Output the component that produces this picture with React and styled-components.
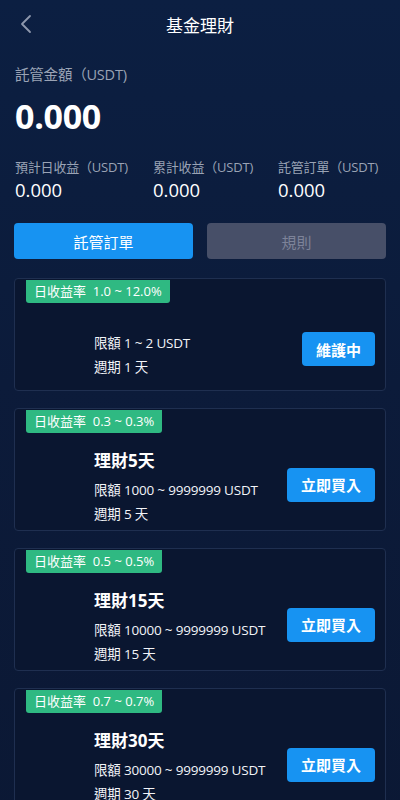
import React from "react";
import styled, { createGlobalStyle } from "styled-components";

const Global = createGlobalStyle`
  html, body { margin: 0; padding: 0; background: #0c1d3d; }
  body { font-family: "Open Sans", "Noto Sans CJK TC", sans-serif; color: #fff; }
  * { box-sizing: border-box; }
`;

const Page = styled.div`
  width: 400px;
  min-height: 800px;
  background: linear-gradient(180deg, #0c1f42 0%, #0c1b3a 45%, #0b1834 100%);
  padding-bottom: 40px;
`;

const Header = styled.div`
  height: 48px;
  display: flex;
  align-items: center;
  justify-content: center;
  position: relative;
`;

const Back = styled.button`
  position: absolute;
  left: 16px;
  top: 12px;
  background: none;
  border: 0;
  padding: 0;
  width: 20px;
  height: 24px;
  display: flex;
  align-items: center;
  justify-content: center;
`;

const Title = styled.h1`
  margin: 0;
  font-size: 17px;
  font-weight: 400;
  font-family: "Noto Sans CJK TC", sans-serif;
  color: #fff;
`;

const Summary = styled.div`
  padding: 17px 15px 0;
`;

const Label = styled.div`
  font-size: ${(p) => (p.$small ? "13px" : "14.5px")};
  color: #9aa3b5;
  font-family: "Open Sans", "Noto Sans CJK TC", sans-serif;
  line-height: 20px;
  white-space: nowrap;
  letter-spacing: -0.2px;
`;

const Big = styled.div`
  font-size: 34px;
  font-weight: 700;
  line-height: 44px;
  margin-top: 9px;
  letter-spacing: -0.3px;
`;

const Stats = styled.div`
  display: grid;
  grid-template-columns: 138px 125px 1fr;
  margin-top: 19px;
`;

const Value = styled.div`
  font-size: 18.5px;
  line-height: 26px;
`;

const Tabs = styled.div`
  display: grid;
  grid-template-columns: 1fr 1fr;
  gap: 14px;
  padding: 0 14px;
  margin-top: 20px;
`;

const Tab = styled.button`
  height: 36px;
  border: 0;
  border-radius: 4px;
  font-family: "Noto Sans CJK TC", sans-serif;
  font-size: 15px;
  background: ${(p) => (p.$active ? "#1793f2" : "#474f68")};
  color: ${(p) => (p.$active ? "#fff" : "#7d8399")};
`;

const List = styled.div`
  display: flex;
  flex-direction: column;
  gap: 17px;
  padding: 0 14px;
  margin-top: 19px;
`;

const Card = styled.div`
  background: #0a1630;
  border: 1px solid #1f2f50;
  border-radius: 4px;
`;

const Tag = styled.div`
  display: inline-block;
  margin-left: 11px;
  height: 23px;
  line-height: 23px;
  padding: 0 8px;
  background: #2fb982;
  border-radius: 0 0 3px 3px;
  font-size: 13px;
  color: #fff;
  white-space: nowrap;
`;

const Body = styled.div`
  display: flex;
  align-items: center;
  justify-content: space-between;
  padding: ${(p) => (p.$noTitle ? "28px 10px 11px 79px" : "16px 10px 4px 79px")};
`;

const Info = styled.div`
  display: flex;
  flex-direction: column;
`;

const Name = styled.div`
  font-size: 17px;
  font-weight: 700;
  line-height: 24px;
  margin-bottom: 5px;
  font-family: "Open Sans", "Noto Sans CJK TC", sans-serif;
`;

const Line = styled.div`
  font-size: 13.5px;
  line-height: 24px;
  color: #f2f4f8;
  white-space: nowrap;
  letter-spacing: -0.2px;
`;

const Action = styled.button`
  height: 34px;
  padding: 0 14px;
  border: 0;
  border-radius: 4px;
  background: #1793f2;
  color: #fff;
  font-size: 15px;
  font-weight: 700;
  font-family: "Noto Sans CJK TC", sans-serif;
  margin-bottom: ${(p) => (p.$noTitle ? "12px" : "6px")};
`;

const products = [
  { rate: "1.0 ~ 12.0%", name: "", limit: "1 ~ 2 USDT", period: "1", action: "維護中" },
  { rate: "0.3 ~ 0.3%", name: "理財5天", limit: "1000 ~ 9999999 USDT", period: "5", action: "立即買入" },
  { rate: "0.5 ~ 0.5%", name: "理財15天", limit: "10000 ~ 9999999 USDT", period: "15", action: "立即買入" },
  { rate: "0.7 ~ 0.7%", name: "理財30天", limit: "30000 ~ 9999999 USDT", period: "30", action: "立即買入" },
];

export default function App() {
  return (
    <Page>
      <Global />
      <Header>
        <Back aria-label="back">
          <svg width="12" height="20" viewBox="0 0 12 20">
            <path d="M10 2 L2 10 L10 18" fill="none" stroke="#8e98ad" strokeWidth="1.8" strokeLinecap="round" strokeLinejoin="round" />
          </svg>
        </Back>
        <Title>基金理財</Title>
      </Header>
      <Summary>
        <Label>託管金額（USDT)</Label>
        <Big>0.000</Big>
        <Stats>
          <div>
            <Label $small>預計日收益（USDT)</Label>
            <Value>0.000</Value>
          </div>
          <div>
            <Label $small>累計收益（USDT)</Label>
            <Value>0.000</Value>
          </div>
          <div>
            <Label $small>託管訂單（USDT)</Label>
            <Value>0.000</Value>
          </div>
        </Stats>
      </Summary>
      <Tabs>
        <Tab $active>託管訂單</Tab>
        <Tab>規則</Tab>
      </Tabs>
      <List>
        {products.map((p, i) => (
          <Card key={i}>
            <Tag>日收益率&nbsp; {p.rate}</Tag>
            <Body $noTitle={!p.name}>
              <Info>
                {p.name && <Name>{p.name}</Name>}
                <Line>限額 {p.limit}</Line>
                <Line>週期 {p.period} 天</Line>
              </Info>
              <Action $noTitle={!p.name}>{p.action}</Action>
            </Body>
          </Card>
        ))}
      </List>
    </Page>
  );
}
